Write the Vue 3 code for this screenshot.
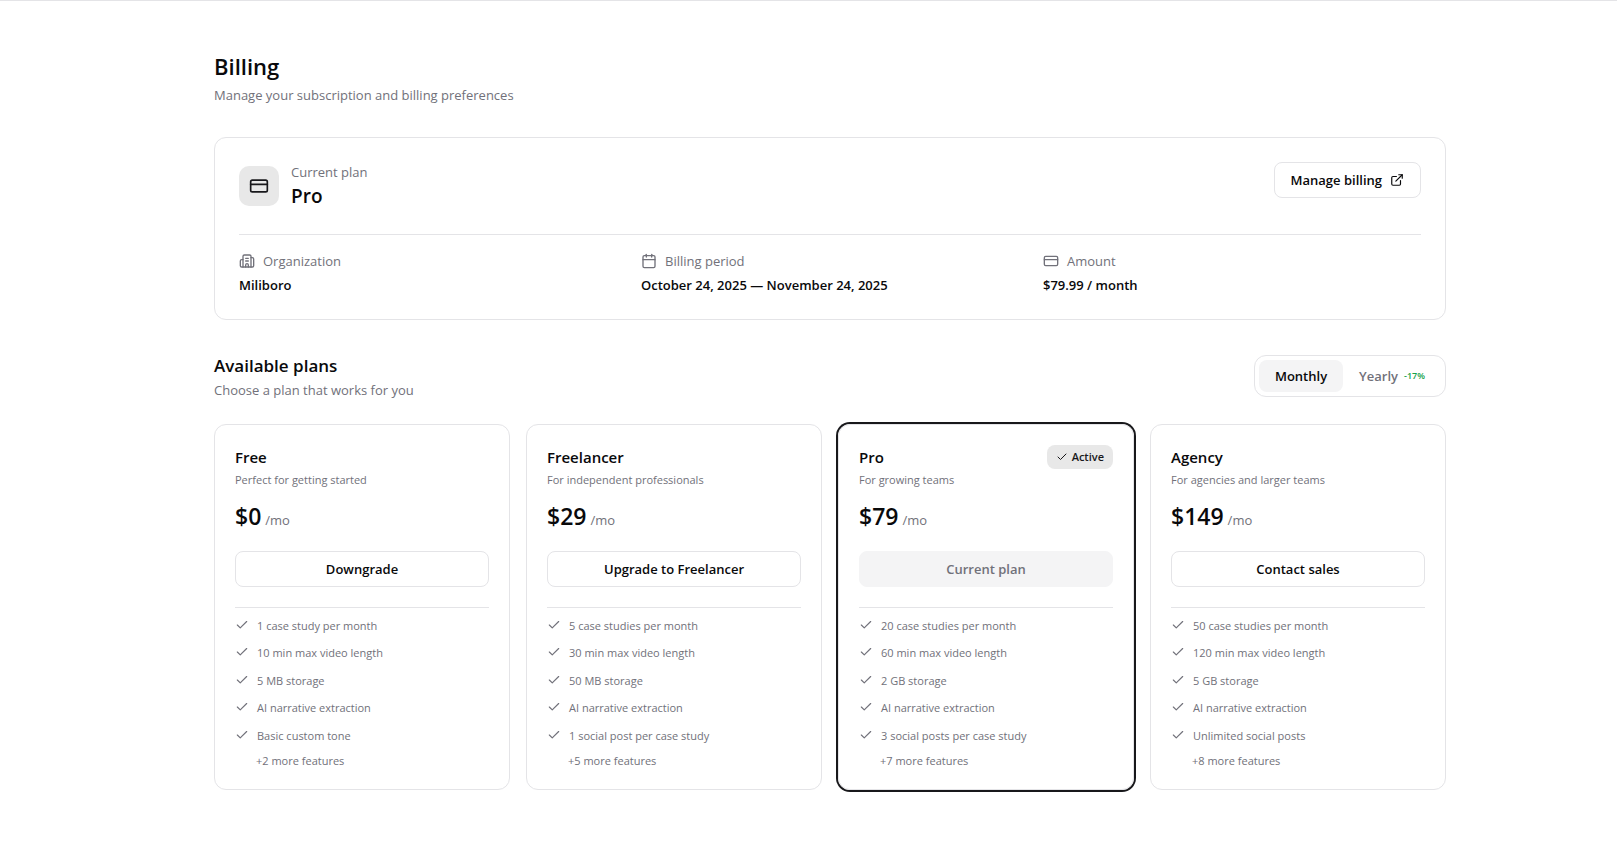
<script setup>
import { ref, h } from 'vue'

const iconShapes = {
  card: [
    ['rect', { x: 2, y: 5, width: 20, height: 14, rx: 2 }],
    ['path', { d: 'M2 10h20' }],
  ],
  building: [
    ['path', { d: 'M10 12h4' }],
    ['path', { d: 'M10 8h4' }],
    ['path', { d: 'M14 21v-3a2 2 0 0 0-4 0v3' }],
    ['path', { d: 'M6 10H4a2 2 0 0 0-2 2v7a2 2 0 0 0 2 2h16a2 2 0 0 0 2-2V9a2 2 0 0 0-2-2h-2' }],
    ['path', { d: 'M6 21V5a2 2 0 0 1 2-2h8a2 2 0 0 1 2 2v16' }],
  ],
  calendar: [
    ['path', { d: 'M8 2v4' }],
    ['path', { d: 'M16 2v4' }],
    ['rect', { x: 3, y: 4, width: 18, height: 18, rx: 2 }],
    ['path', { d: 'M3 10h18' }],
  ],
  external: [
    ['path', { d: 'M15 3h6v6' }],
    ['path', { d: 'M10 14 21 3' }],
    ['path', { d: 'M18 13v6a2 2 0 0 1-2 2H5a2 2 0 0 1-2-2V8a2 2 0 0 1 2-2h6' }],
  ],
  check: [['path', { d: 'M20 6 9 17l-5-5' }]],
}

const Icon = (props) =>
  h(
    'svg',
    {
      viewBox: '0 0 24 24',
      width: props.size,
      height: props.size,
      fill: 'none',
      stroke: 'currentColor',
      'stroke-width': 2,
      'stroke-linecap': 'round',
      'stroke-linejoin': 'round',
      'aria-hidden': 'true',
    },
    iconShapes[props.name].map(([tag, attrs]) => h(tag, attrs)),
  )
Icon.props = ['name', 'size']

const cycle = ref('monthly')

const details = [
  { icon: 'building', label: 'Organization', value: 'Miliboro' },
  { icon: 'calendar', label: 'Billing period', value: 'October 24, 2025 — November 24, 2025' },
  { icon: 'card', label: 'Amount', value: '$79.99 / month' },
]

const plans = [
  {
    name: 'Free',
    blurb: 'Perfect for getting started',
    price: '$0',
    action: 'Downgrade',
    features: ['1 case study per month', '10 min max video length', '5 MB storage', 'AI narrative extraction', 'Basic custom tone'],
    more: 2,
  },
  {
    name: 'Freelancer',
    blurb: 'For independent professionals',
    price: '$29',
    action: 'Upgrade to Freelancer',
    features: ['5 case studies per month', '30 min max video length', '50 MB storage', 'AI narrative extraction', '1 social post per case study'],
    more: 5,
  },
  {
    name: 'Pro',
    blurb: 'For growing teams',
    price: '$79',
    action: 'Current plan',
    active: true,
    features: ['20 case studies per month', '60 min max video length', '2 GB storage', 'AI narrative extraction', '3 social posts per case study'],
    more: 7,
  },
  {
    name: 'Agency',
    blurb: 'For agencies and larger teams',
    price: '$149',
    action: 'Contact sales',
    features: ['50 case studies per month', '120 min max video length', '5 GB storage', 'AI narrative extraction', 'Unlimited social posts'],
    more: 8,
  },
]
</script>

<template>
  <main class="page">
    <div class="container">
      <header class="page-head">
        <h1>Billing</h1>
        <p class="muted">Manage your subscription and billing preferences</p>
      </header>

      <section class="summary">
        <div class="summary-top">
          <div class="plan-now">
            <span class="plan-icon"><Icon name="card" :size="20" /></span>
            <div>
              <p class="muted">Current plan</p>
              <p class="plan-name">Pro</p>
            </div>
          </div>
          <button type="button" class="btn">Manage billing <Icon name="external" :size="14" /></button>
        </div>
        <dl class="details">
          <div v-for="d in details" :key="d.label">
            <dt><Icon :name="d.icon" :size="16" />{{ d.label }}</dt>
            <dd>{{ d.value }}</dd>
          </div>
        </dl>
      </section>

      <section class="plans">
        <div class="plans-head">
          <div>
            <h2>Available plans</h2>
            <p class="muted">Choose a plan that works for you</p>
          </div>
          <div class="toggle" role="group" aria-label="Billing cycle">
            <button type="button" :class="{ on: cycle === 'monthly' }" :aria-pressed="cycle === 'monthly'" @click="cycle = 'monthly'">Monthly</button>
            <button type="button" :class="{ on: cycle === 'yearly' }" :aria-pressed="cycle === 'yearly'" @click="cycle = 'yearly'">
              Yearly <span class="saving">-17%</span>
            </button>
          </div>
        </div>

        <div class="grid">
          <article v-for="p in plans" :key="p.name" class="plan" :class="{ active: p.active }">
            <div class="plan-title">
              <h3>{{ p.name }}</h3>
              <span v-if="p.active" class="badge"><Icon name="check" :size="12" />Active</span>
            </div>
            <p class="blurb">{{ p.blurb }}</p>
            <p class="price"><strong>{{ p.price }}</strong><span>/mo</span></p>
            <button type="button" class="btn wide" :disabled="p.active">{{ p.action }}</button>
            <div class="features">
              <ul>
                <li v-for="f in p.features" :key="f"><Icon name="check" :size="14" />{{ f }}</li>
              </ul>
              <p class="more">+{{ p.more }} more features</p>
            </div>
          </article>
        </div>
      </section>
    </div>
  </main>
</template>

<style>
body {
  background: #fff;
}
</style>

<style scoped>
* {
  box-sizing: border-box;
  margin: 0;
  padding: 0;
}
.page {
  border-top: 1px solid #e4e4e7;
  padding: 48px 24px 48px 67px;
  font: 400 13px/20px 'Open Sans', 'Noto Sans', sans-serif;
  color: #09090b;
}
.container {
  max-width: 1232px;
  margin: 0 auto;
}
svg {
  flex: none;
}
h1 {
  font-size: 22px;
  line-height: 34px;
  font-weight: 600;
  margin-bottom: 2px;
}
.muted {
  color: #71717a;
}
.summary {
  margin-top: 32px;
  padding: 24px;
  border: 1px solid #e4e4e7;
  border-radius: 12px;
}
.summary-top {
  display: flex;
  justify-content: space-between;
  align-items: flex-start;
}
.plan-now {
  display: flex;
  align-items: center;
  gap: 12px;
}
.plan-icon {
  display: flex;
  align-items: center;
  justify-content: center;
  width: 40px;
  height: 40px;
  border-radius: 10px;
  background: #e8e8e8;
  color: #18181b;
}
.plan-name {
  font-size: 19px;
  line-height: 28px;
  font-weight: 600;
}
.btn {
  display: inline-flex;
  align-items: center;
  justify-content: center;
  gap: 8px;
  height: 36px;
  padding: 0 16px;
  border: 1px solid #e4e4e7;
  border-radius: 8px;
  background: #fff;
  color: #09090b;
  font: inherit;
  font-weight: 600;
}
.btn:disabled {
  background: #f4f4f5;
  border-color: #f4f4f5;
  color: #71717a;
}
.wide {
  width: 100%;
}
.details {
  display: grid;
  grid-template-columns: repeat(3, 1fr);
  gap: 24px;
  margin-top: 24px;
  padding-top: 16px;
  border-top: 1px solid #e4e4e7;
}
dt {
  display: flex;
  align-items: center;
  gap: 8px;
  color: #71717a;
}
dd {
  margin-top: 4px;
  font-weight: 600;
}
.plans {
  margin-top: 32px;
}
.plans-head {
  display: flex;
  align-items: center;
  justify-content: space-between;
}
h2 {
  font-size: 17px;
  line-height: 28px;
  font-weight: 600;
}
.toggle {
  display: flex;
  padding: 4px;
  border: 1px solid #e4e4e7;
  border-radius: 12px;
}
.toggle button {
  display: flex;
  align-items: center;
  gap: 6px;
  height: 32px;
  padding: 0 16px;
  border: 0;
  border-radius: 8px;
  background: none;
  color: #71717a;
  font: inherit;
  font-weight: 600;
}
.toggle .on {
  background: #f4f4f5;
  color: #09090b;
}
.saving {
  font-size: 9px;
  color: #16a34a;
}
.grid {
  display: grid;
  grid-template-columns: repeat(4, 1fr);
  gap: 16px;
  margin-top: 24px;
}
.plan {
  padding: 20px;
  border: 1px solid #e4e4e7;
  border-radius: 12px;
}
.plan.active {
  box-shadow: 0 0 0 2px #18181b;
}
.plan-title {
  display: flex;
  align-items: center;
  justify-content: space-between;
  height: 24px;
}
h3 {
  font-size: 15px;
  line-height: 24px;
  font-weight: 600;
}
.badge {
  display: flex;
  align-items: center;
  gap: 4px;
  height: 24px;
  padding: 0 9px;
  border-radius: 8px;
  background: #e8e8e8;
  color: #18181b;
  font-size: 11px;
  font-weight: 600;
}
.blurb {
  margin-top: 3px;
  font-size: 11px;
  line-height: 16px;
  color: #71717a;
}
.price {
  display: flex;
  align-items: baseline;
  gap: 4px;
  margin: 12px 0 19px;
}
.price strong {
  font-size: 23px;
  line-height: 32px;
  font-weight: 600;
}
.price span {
  color: #71717a;
}
.features {
  margin-top: 20px;
  padding-top: 8px;
  border-top: 1px solid #e4e4e7;
  font-size: 11px;
  color: #71717a;
}
ul {
  display: grid;
  gap: 8px;
  list-style: none;
  line-height: 1.77;
}
li {
  display: flex;
  align-items: flex-start;
  gap: 8px;
}
li svg {
  margin-top: 2px;
}
.more {
  margin-top: 8px;
  padding-left: 21px;
  line-height: 16px;
}
</style>
